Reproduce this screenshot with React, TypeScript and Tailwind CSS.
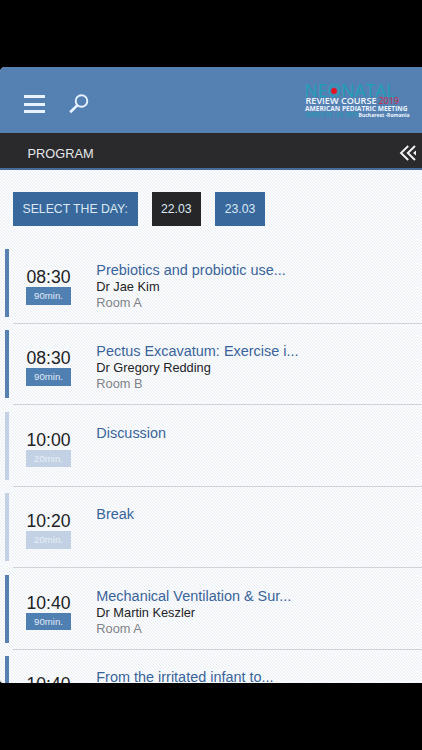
const sessions = [
  { time: '08:30', length: '90min.', title: 'Prebiotics and probiotic use...', speaker: 'Dr Jae Kim', room: 'Room A' },
  { time: '08:30', length: '90min.', title: 'Pectus Excavatum: Exercise i...', speaker: 'Dr Gregory Redding', room: 'Room B' },
  { time: '10:00', length: '20min.', title: 'Discussion', light: true },
  { time: '10:20', length: '20min.', title: 'Break', light: true },
  { time: '10:40', length: '90min.', title: 'Mechanical Ventilation & Sur...', speaker: 'Dr Martin Keszler', room: 'Room A' },
  { time: '10:40', length: '90min.', title: 'From the irritated infant to...', speaker: '', room: '' },
];

type Session = { time: string; length: string; title: string; speaker?: string; room?: string; light?: boolean };

function Logo() {
  return (
    <svg width="110" height="42" viewBox="304 80 110 42" fontFamily="'Open Sans', 'Noto Sans', sans-serif">
      <text x="304.5" y="97" fontSize="17.5" fill="#1da0b8" textLength="91" lengthAdjust="spacingAndGlyphs">NEONATAL</text>
      <circle cx="334" cy="91" r="2.9" fill="#e3141f" />
      <text x="305.5" y="104.2" fontSize="8.4" fontWeight="600" fill="#f2f8ff" textLength="71" lengthAdjust="spacingAndGlyphs">REVIEW COURSE</text>
      <text x="378.5" y="104.2" fontSize="8.8" fontWeight="400" fill="#d02844" textLength="20.5" lengthAdjust="spacingAndGlyphs">2019</text>
      <text x="305" y="111" fontSize="6.8" fontWeight="700" fill="#eaf4ff" textLength="102.5" lengthAdjust="spacingAndGlyphs">AMERICAN PEDIATRIC MEETING</text>
      <text x="305.5" y="117" fontSize="6.4" fontWeight="600" fill="#1f9cb8" textLength="52" lengthAdjust="spacingAndGlyphs">MARCH 22 - 24, 2019</text>
      <text x="358.5" y="117" fontSize="5.8" fontWeight="700" fill="#f2f8ff" textLength="51" lengthAdjust="spacingAndGlyphs">Bucharest -Romania</text>
    </svg>
  );
}

function Row({ s }: { s: Session }) {
  return (
    <li className="flex h-[81.4px] shrink-0 items-start pl-[5px]">
      <div className={`h-[68px] w-1 shrink-0 ${s.light ? 'bg-[#c2d1e3]' : 'bg-[#5681b1]'}`} />
      <div className="ml-1 flex h-[75px] grow border-b border-[#cfd3d8] pl-[13px]">
        <div className="w-[45px] shrink-0 pt-[18px] text-center">
          <div className="h-5 text-[17.6px] leading-5 text-[#202124]">{s.time}</div>
          <div className={`h-[17.5px] text-[9.6px] leading-[18px] ${s.light ? 'bg-[#c2d1e3] text-[#e9f0f8]' : 'bg-[#507fb2] text-[#e0ebf7]'}`}>{s.length}</div>
        </div>
        <div className="ml-[25.3px] whitespace-nowrap pt-[13px]">
          <div className="text-[14.45px] leading-[17px] text-[#39649a]">{s.title}</div>
          <div className="text-[12.8px] leading-4 text-[#222326]">{s.speaker}</div>
          <div className="text-[12.8px] leading-4 text-[#808388]">{s.room}</div>
        </div>
      </div>
    </li>
  );
}

export default function App() {
  return (
    <div className="h-[750px] w-[422px] overflow-hidden bg-black pt-[67px] font-['Liberation_Sans',Arial,sans-serif]">
      <div className="flex h-[616px] flex-col overflow-hidden rounded-tl-[5px] rounded-bl-[3px] bg-[#f8fafc] bg-[linear-gradient(45deg,#fcfdfe_34%,#e9edf1_46%,#e9edf1_54%,#fcfdfe_66%)] bg-[length:3px_3px]">
        <header className="flex h-[66px] shrink-0 items-start bg-[#5581b2]">
          <button aria-label="Menu" className="ml-6 mt-7 flex w-[20.5px] flex-col gap-[4.5px]">
            <span className="h-[3px] bg-[#e8f3ff]" />
            <span className="h-[3px] bg-[#e8f3ff]" />
            <span className="h-[3px] bg-[#e8f3ff]" />
          </button>
          <button aria-label="Search" className="ml-[24.5px] mt-[26px]">
            <svg width="20" height="22" viewBox="0 0 20 22" fill="none" stroke="#e8f3ff">
              <circle cx="12.5" cy="8" r="5.8" strokeWidth="1.9" />
              <path d="M8.2 12.4 1.2 19.3" strokeWidth="2.6" />
            </svg>
          </button>
          <div className="ml-auto mr-2 mt-[13px]"><Logo /></div>
        </header>
        <div className="flex h-[37px] shrink-0 items-center border-b-2 border-[#496b99] bg-[#2a2a2c] pl-[27.5px] pr-[5px] text-[12.8px] text-[#e6e8eb]">
          <span className="pt-[6px]">PROGRAM</span>
          <svg className="ml-auto mt-1" width="18" height="16" viewBox="0 0 18 16" fill="none" stroke="#f2f4f6" strokeWidth="1.9">
            <path d="M9.2 1 2 8 9.2 15M16 1 8.8 8 16 15" />
            <path d="M17 5.5v5L14 8Z" fill="#f2f4f6" stroke="none" />
          </svg>
        </div>
        <div className="mt-[22px] flex h-[34px] shrink-0 pl-[13px] text-[12.25px] leading-[34px] text-[#dce8f5]">
          <div className="w-[124.5px] bg-[#38689c] text-center">SELECT THE DAY:</div>
          <div className="ml-[14px] w-[49.5px] bg-[#262628] text-center">22.03</div>
          <div className="ml-[14px] w-[50px] bg-[#38689c] text-center">23.03</div>
        </div>
        <ul className="mt-[23px] flex flex-col">
          {sessions.map((s, i) => <Row key={i} s={s} />)}
        </ul>
      </div>
    </div>
  );
}
